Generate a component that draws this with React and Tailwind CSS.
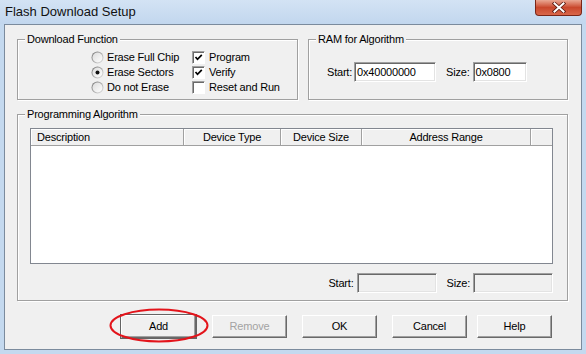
const Radio = ({ checked }) => (
  <svg width="13" height="13" viewBox="0 0 13 13" className="shrink-0">
    <defs>
      <linearGradient id="ring" x1="0" y1="0" x2="1" y2="1">
        <stop offset="0" stopColor="#6f6f6f" />
        <stop offset="1" stopColor="#e6e6e6" />
      </linearGradient>
      <linearGradient id="fill" x1="0" y1="0" x2="1" y2="1">
        <stop offset="0" stopColor="#dcdcdc" />
        <stop offset="1" stopColor="#ffffff" />
      </linearGradient>
    </defs>
    <circle cx="6.5" cy="6.5" r="6" fill="url(#ring)" />
    <circle cx="6.5" cy="6.5" r="5" fill="url(#fill)" />
    {checked && <circle cx="6.5" cy="6.5" r="2" fill="#111" />}
  </svg>
);

const Check = ({ checked }) => (
  <span className="w-[13px] h-[13px] shrink-0 flex items-center justify-center bg-white border border-t-[#a0a0a0] border-l-[#a0a0a0] border-b-white border-r-white shadow-[inset_1px_1px_0_#696969]">
    {checked && (
      <svg width="9" height="9" viewBox="0 0 9 9">
        <path d="M1.5 4 L3.5 6.3 L7.8 1.8" fill="none" stroke="#000" strokeWidth="1.7" />
      </svg>
    )}
  </span>
);

const Field = ({ value, className, disabled }) => (
  <div
    className={`h-[20px] px-[2px] flex items-center border border-t-[#a0a0a0] border-l-[#a0a0a0] border-b-white border-r-white shadow-[inset_1px_1px_0_#696969,inset_-1px_-1px_0_#e3e3e3] ${
      disabled ? "bg-[#f0f0f0]" : "bg-white"
    } ${className}`}
  >
    {value}
  </div>
);

const Group = ({ title, className, children }) => (
  <div
    className={`relative border border-[#a0a0a0] shadow-[1px_1px_0_#fff,inset_1px_1px_0_#fff] ${className}`}
  >
    <span className="absolute left-[7px] top-[-7px] px-[2px] bg-[#f0f0f0] leading-[13px]">
      {title}
    </span>
    {children}
  </div>
);

const Button = ({ label, className = "", disabled, isDefault }) => (
  <button
    type="button"
    className={`w-[75px] h-[23px] flex items-center justify-center bg-[#f0f0f0] border border-t-white border-l-white border-b-[#696969] border-r-[#696969] shadow-[inset_-1px_-1px_0_#a0a0a0] ${
      isDefault ? "outline outline-1 outline-[#646464]" : ""
    } ${disabled ? "text-[#a3a3a3]" : "text-black"} ${className}`}
  >
    {label}
  </button>
);

export default function App() {
  return (
    <div className="relative w-[586px] h-[354px] overflow-hidden flex flex-col bg-[#c4d9ef] font-['Liberation_Sans',Arial,sans-serif] text-[11px] leading-[13px] tracking-[-0.2px] text-black">
      <div className="h-[24px] shrink-0 flex items-start bg-gradient-to-b from-[#d3e3f4] to-[#c2d7ee]">
        <span className="ml-[5px] mt-[4px] text-[13px] leading-[15px] tracking-normal text-[#111]">
          Flash Download Setup
        </span>
        <div className="ml-auto mr-[4px] w-[47px] h-[16px] flex items-center justify-center rounded-b-[4px] border border-t-0 border-[#7a2617] bg-gradient-to-b from-[#e9a793] via-[#c9472c] to-[#d9674a]">
          <svg width="14" height="11" viewBox="0 0 14 11">
            <path d="M2.5 1.5 L11.5 9.5 M11.5 1.5 L2.5 9.5" stroke="#5a1a10" strokeWidth="3.6" strokeLinecap="square" />
            <path d="M2.5 1.5 L11.5 9.5 M11.5 1.5 L2.5 9.5" stroke="#fff" strokeWidth="2" strokeLinecap="square" />
          </svg>
        </div>
      </div>

      <div className="mx-[4px] mb-[4px] flex-1 flex flex-col border border-[#7b8b9d] bg-[#f0f0f0] pl-[12px] pr-[13px] pt-[14px]">
        <div className="flex gap-[10px] h-[61px]">
          <Group title="Download Function" className="w-[281px]">
            <div className="grid grid-cols-[101px_auto] pl-[73px] pt-[10px]">
              <div className="flex items-center gap-[3px] h-[15px]">
                <Radio />
                <span>Erase Full Chip</span>
              </div>
              <div className="flex items-center gap-[4px] h-[15px]">
                <Check checked />
                <span>Program</span>
              </div>
              <div className="flex items-center gap-[3px] h-[15px]">
                <Radio checked />
                <span>Erase Sectors</span>
              </div>
              <div className="flex items-center gap-[4px] h-[15px]">
                <Check checked />
                <span>Verify</span>
              </div>
              <div className="flex items-center gap-[3px] h-[15px]">
                <Radio />
                <span>Do not Erase</span>
              </div>
              <div className="flex items-center gap-[4px] h-[15px]">
                <Check />
                <span>Reset and Run</span>
              </div>
            </div>
          </Group>

          <Group title="RAM for Algorithm" className="flex-1">
            <div className="flex items-center pl-[18px] pt-[22px]">
              <span>Start:</span>
              <Field value="0x40000000" className="ml-[2px] w-[82px]" />
              <span className="ml-[10px]">Size:</span>
              <Field value="0x0800" className="ml-[3px] w-[54px]" />
            </div>
          </Group>
        </div>

        <Group title="Programming Algorithm" className="mt-[14px] h-[187px]">
          <div className="pl-[12px] pt-[13px] pr-[14px]">
            <div className="w-[523px] h-[136px] bg-white border border-[#828790] flex flex-col">
              <div className="h-[17px] flex bg-[#f0f0f0] border-b border-[#a0a0a0]">
                <div className="w-[153px] pl-[6px] flex items-center border-r border-[#a0a0a0] shadow-[inset_1px_1px_0_#fff]">
                  Description
                </div>
                <div className="w-[97px] flex items-center justify-center border-r border-[#a0a0a0] shadow-[inset_1px_1px_0_#fff]">
                  Device Type
                </div>
                <div className="w-[81px] flex items-center justify-center border-r border-[#a0a0a0] shadow-[inset_1px_1px_0_#fff]">
                  Device Size
                </div>
                <div className="w-[169px] flex items-center justify-center border-r border-[#a0a0a0] shadow-[inset_1px_1px_0_#fff]">
                  Address Range
                </div>
                <div className="flex-1 shadow-[inset_1px_1px_0_#fff]" />
              </div>
            </div>
            <div className="mt-[9px] flex items-center justify-end">
              <span>Start:</span>
              <Field disabled className="ml-[3px] w-[80px]" />
              <span className="ml-[10px]">Size:</span>
              <Field disabled className="ml-[3px] w-[80px]" />
            </div>
          </div>
        </Group>

        <div className="mt-[14px] flex">
          <Button label="Add" isDefault className="ml-[104px] w-[74px]" />
          <Button label="Remove" disabled className="ml-[16px]" />
          <Button label="OK" className="ml-[15px]" />
          <Button label="Cancel" className="ml-[15px]" />
          <Button label="Help" className="ml-[10px]" />
        </div>
      </div>

      <svg
        className="absolute left-[109px] top-[308px]"
        width="100"
        height="35"
        viewBox="0 0 100 35"
      >
        <ellipse cx="50" cy="17.5" rx="48.5" ry="16" fill="none" stroke="#e3141b" strokeWidth="2" />
      </svg>
    </div>
  );
}
